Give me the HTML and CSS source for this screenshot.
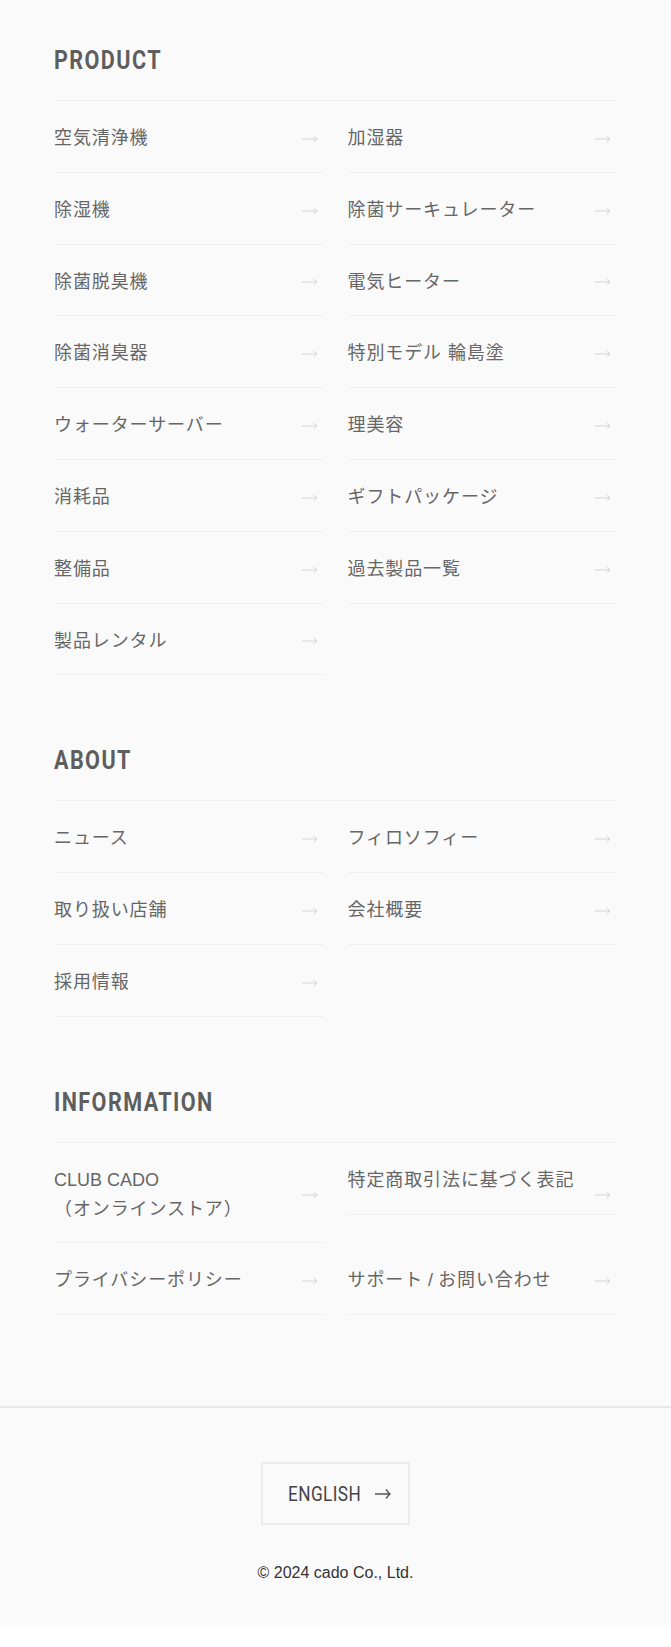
FILE: index.html
```html
<!DOCTYPE html>
<html lang="ja">
<head>
    <meta charset="UTF-8">
    <meta name="viewport" content="width=device-width, initial-scale=1.0">
    <title>cado footer</title>
    <link rel="stylesheet" href="styles.css">
</head>
<body>
<footer class="site-footer">
    <div class="footer-nav">

        <section class="nav-section">
            <h2 class="nav-title"><span>PRODUCT</span></h2>
            <ul class="nav-list">
                <li class="nav-item"><a href="#">空気清浄機<svg class="arrow" viewBox="0 0 16 8"><path d="M0 4H15M11.5 1L15 4L11.5 7"/></svg></a></li>
                <li class="nav-item"><a href="#">加湿器<svg class="arrow" viewBox="0 0 16 8"><path d="M0 4H15M11.5 1L15 4L11.5 7"/></svg></a></li>
                <li class="nav-item"><a href="#">除湿機<svg class="arrow" viewBox="0 0 16 8"><path d="M0 4H15M11.5 1L15 4L11.5 7"/></svg></a></li>
                <li class="nav-item"><a href="#">除菌サーキュレーター<svg class="arrow" viewBox="0 0 16 8"><path d="M0 4H15M11.5 1L15 4L11.5 7"/></svg></a></li>
                <li class="nav-item"><a href="#">除菌脱臭機<svg class="arrow" viewBox="0 0 16 8"><path d="M0 4H15M11.5 1L15 4L11.5 7"/></svg></a></li>
                <li class="nav-item"><a href="#">電気ヒーター<svg class="arrow" viewBox="0 0 16 8"><path d="M0 4H15M11.5 1L15 4L11.5 7"/></svg></a></li>
                <li class="nav-item"><a href="#">除菌消臭器<svg class="arrow" viewBox="0 0 16 8"><path d="M0 4H15M11.5 1L15 4L11.5 7"/></svg></a></li>
                <li class="nav-item"><a href="#">特別モデル 輪島塗<svg class="arrow" viewBox="0 0 16 8"><path d="M0 4H15M11.5 1L15 4L11.5 7"/></svg></a></li>
                <li class="nav-item"><a href="#">ウォーターサーバー<svg class="arrow" viewBox="0 0 16 8"><path d="M0 4H15M11.5 1L15 4L11.5 7"/></svg></a></li>
                <li class="nav-item"><a href="#">理美容<svg class="arrow" viewBox="0 0 16 8"><path d="M0 4H15M11.5 1L15 4L11.5 7"/></svg></a></li>
                <li class="nav-item"><a href="#">消耗品<svg class="arrow" viewBox="0 0 16 8"><path d="M0 4H15M11.5 1L15 4L11.5 7"/></svg></a></li>
                <li class="nav-item"><a href="#">ギフトパッケージ<svg class="arrow" viewBox="0 0 16 8"><path d="M0 4H15M11.5 1L15 4L11.5 7"/></svg></a></li>
                <li class="nav-item"><a href="#">整備品<svg class="arrow" viewBox="0 0 16 8"><path d="M0 4H15M11.5 1L15 4L11.5 7"/></svg></a></li>
                <li class="nav-item"><a href="#">過去製品一覧<svg class="arrow" viewBox="0 0 16 8"><path d="M0 4H15M11.5 1L15 4L11.5 7"/></svg></a></li>
                <li class="nav-item"><a href="#">製品レンタル<svg class="arrow" viewBox="0 0 16 8"><path d="M0 4H15M11.5 1L15 4L11.5 7"/></svg></a></li>
            </ul>
        </section>

        <section class="nav-section">
            <h2 class="nav-title"><span>ABOUT</span></h2>
            <ul class="nav-list">
                <li class="nav-item"><a href="#">ニュース<svg class="arrow" viewBox="0 0 16 8"><path d="M0 4H15M11.5 1L15 4L11.5 7"/></svg></a></li>
                <li class="nav-item"><a href="#">フィロソフィー<svg class="arrow" viewBox="0 0 16 8"><path d="M0 4H15M11.5 1L15 4L11.5 7"/></svg></a></li>
                <li class="nav-item"><a href="#">取り扱い店舗<svg class="arrow" viewBox="0 0 16 8"><path d="M0 4H15M11.5 1L15 4L11.5 7"/></svg></a></li>
                <li class="nav-item"><a href="#">会社概要<svg class="arrow" viewBox="0 0 16 8"><path d="M0 4H15M11.5 1L15 4L11.5 7"/></svg></a></li>
                <li class="nav-item"><a href="#">採用情報<svg class="arrow" viewBox="0 0 16 8"><path d="M0 4H15M11.5 1L15 4L11.5 7"/></svg></a></li>
            </ul>
        </section>

        <section class="nav-section">
            <h2 class="nav-title"><span>INFORMATION</span></h2>
            <ul class="nav-list">
                <li class="nav-item"><a href="#"><span class="latin">CLUB CADO</span><br>（オンラインストア）<svg class="arrow" viewBox="0 0 16 8"><path d="M0 4H15M11.5 1L15 4L11.5 7"/></svg></a></li>
                <li class="nav-item"><a href="#">特定商取引法に基づく表記<svg class="arrow" viewBox="0 0 16 8"><path d="M0 4H15M11.5 1L15 4L11.5 7"/></svg></a></li>
                <li class="nav-item"><a href="#">プライバシーポリシー<svg class="arrow" viewBox="0 0 16 8"><path d="M0 4H15M11.5 1L15 4L11.5 7"/></svg></a></li>
                <li class="nav-item"><a href="#">サポート<span class="latin"> / </span>お問い合わせ<svg class="arrow" viewBox="0 0 16 8"><path d="M0 4H15M11.5 1L15 4L11.5 7"/></svg></a></li>
            </ul>
        </section>

    </div>

    <div class="footer-bottom">
        <a href="#" class="lang-btn">
            <span class="lang-label">ENGLISH</span>
            <svg class="lang-arrow" viewBox="0 0 16 12"><path d="M0 6H14.5M11 1.5C12.6 3.6 14 5.2 15 6C14 6.8 12.6 8.4 11 10.5"/></svg>
        </a>
        <p class="copyright">© 2024 cado Co., Ltd.</p>
    </div>
</footer>
</body>
</html>
```

FILE: styles.css
```css
body {
    margin: 0;
    background-color: #fff;
    font-family: "Liberation Sans", "Noto Sans CJK JP", sans-serif;
}

.site-footer {
    background-color: #fafafa;
}

.footer-nav {
    padding: 43px 54px 91px;
}

.nav-section + .nav-section {
    margin-top: 68px;
}

.nav-title {
    margin: 0 0 23px;
    height: 34px;
    font-family: Roboto, "Liberation Sans", sans-serif;
    font-size: 26px;
    font-weight: 700;
    line-height: 34px;
    color: #5e5e5e;
}

.nav-title span {
    display: inline-block;
    letter-spacing: 1.7px;
    transform: scaleX(0.83);
    transform-origin: left center;
}

.nav-list {
    list-style: none;
    margin: 0;
    padding: 0;
    display: grid;
    grid-template-columns: 1fr 1fr;
    column-gap: 24px;
    border-top: 1px solid #efefef;
}

.nav-item {
    position: relative;
}

.nav-item a {
    display: block;
    padding: 23px 34px 19px 0;
    border-bottom: 1px solid #efefef;
    font-size: 18px;
    line-height: 1.6;
    letter-spacing: 0.05em;
    color: #666;
    text-decoration: none;
}

.nav-item .latin {
    letter-spacing: 0;
}

.arrow {
    position: absolute;
    right: 6px;
    top: 50%;
    width: 16px;
    height: 8px;
    margin-top: -2px;
    fill: none;
    stroke: #d4d4d4;
    stroke-width: 1;
}

.footer-bottom {
    border-top: 2px solid #e8e8e8;
    padding: 54px 0 40px;
    text-align: center;
}

.lang-btn {
    display: inline-flex;
    align-items: center;
    height: 63px;
    box-sizing: border-box;
    padding: 0 17px 0 25px;
    border: 2px solid #ebebeb;
    color: #444;
    text-decoration: none;
}

.lang-label {
    display: inline-block;
    font-family: Roboto, "Liberation Sans", sans-serif;
    font-size: 20px;
    letter-spacing: 0.5px;
    transform: scaleX(0.86);
    transform-origin: left center;
    margin-right: -12px;
}

.lang-arrow {
    width: 16px;
    height: 12px;
    margin-left: 13px;
    fill: none;
    stroke: #555;
    stroke-width: 1.3;
}

.copyright {
    margin: 36px 0 0;
    font-size: 16px;
    line-height: 24px;
    color: #333;
}
```
